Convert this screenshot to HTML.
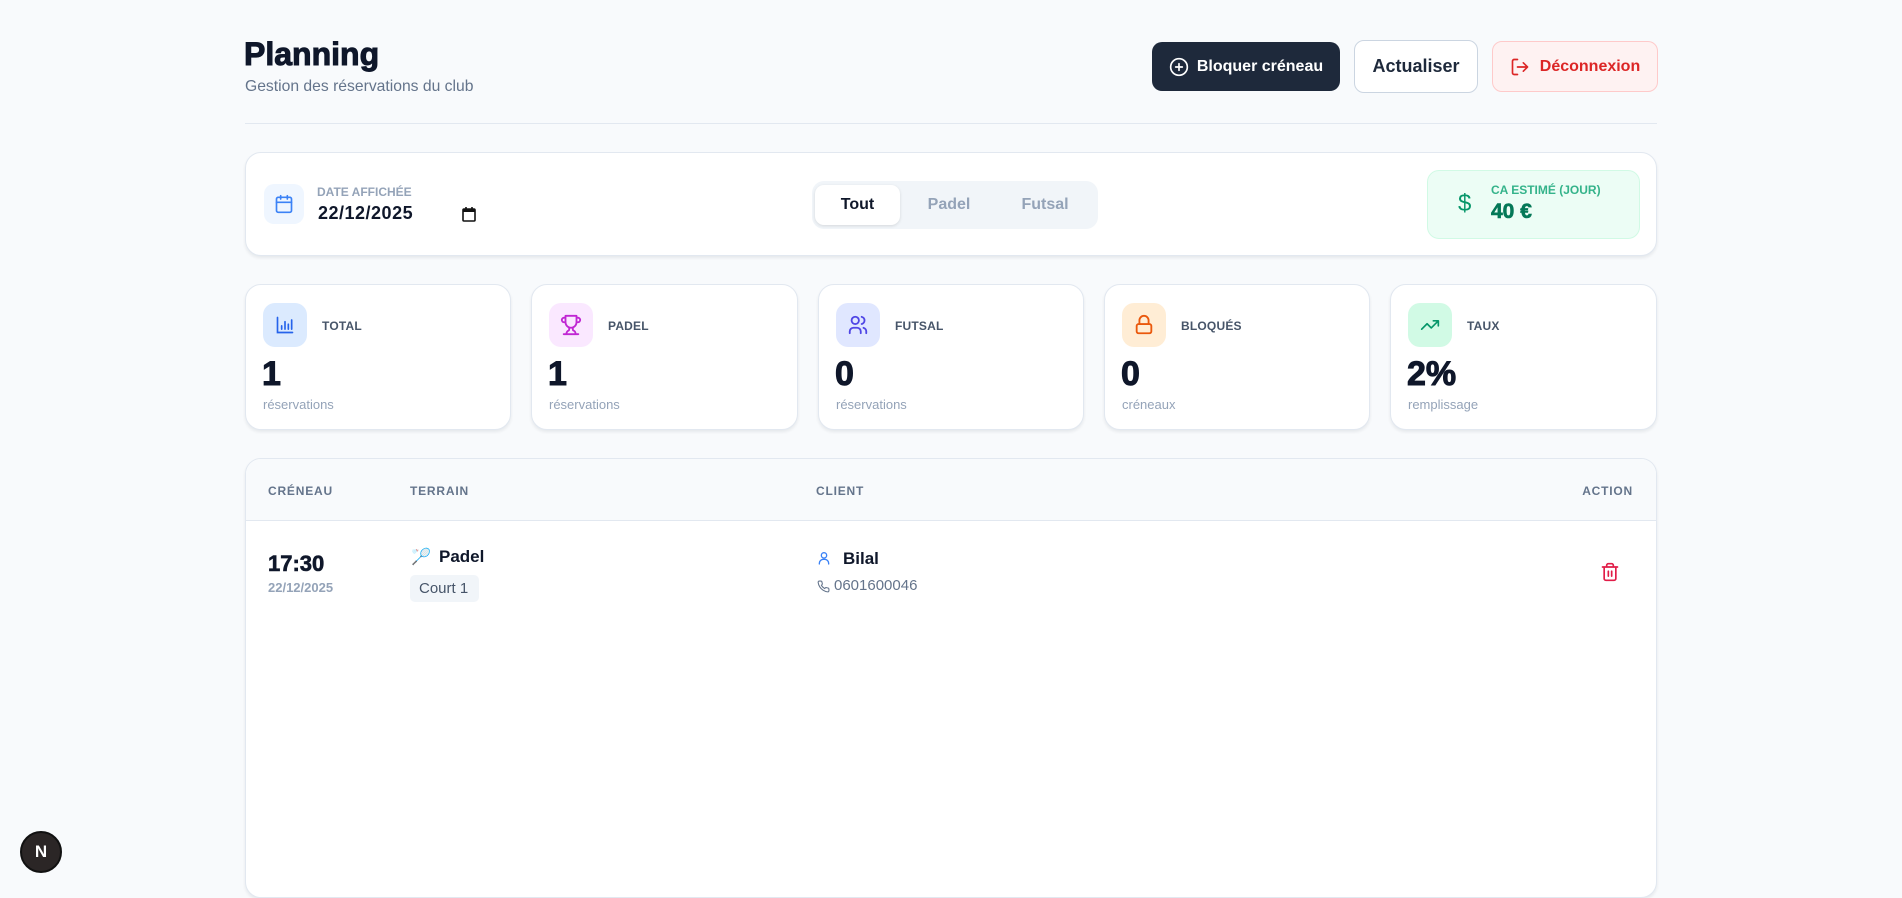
<!DOCTYPE html>
<html><head><meta charset="utf-8"><style>
*{box-sizing:border-box;margin:0;padding:0}
body{width:1902px;height:872px;overflow:hidden;background:#f8fafc;font-family:"Liberation Sans",Arial,sans-serif;position:relative;color:#0f172a}
.a{position:absolute}
.card{position:absolute;background:#fff;border:1px solid #e2e8f0;border-radius:16px;box-shadow:0 2px 3px rgba(15,23,42,.08)}
.btn{position:absolute;border-radius:10px;display:flex;align-items:center;justify-content:center;font-weight:700}
.lbl{font-size:12px;font-weight:700;color:#475569;letter-spacing:.2px}
.num{font-size:34px;font-weight:900;color:#0f172a;-webkit-text-stroke:1px #0f172a}
.sub{font-size:13px;color:#94a3b8}
.ib{position:absolute;width:44px;height:44px;border-radius:12px;display:flex;align-items:center;justify-content:center;left:17px;top:18px}
.th{position:absolute;top:25px;font-size:12px;font-weight:700;color:#64748b;letter-spacing:.8px}
</style></head><body>

<div class="a" style="left:244px;top:36px;font-size:32px;font-weight:900;-webkit-text-stroke:1px #0f172a">Planning</div>
<div class="a" style="left:245px;top:78px;font-size:15.7px;color:#64748b">Gestion des réservations du club</div>

<div class="btn" style="left:1152px;top:42px;width:188px;height:49px;background:#1e293b;color:#fff;font-size:16px">
<svg width="20" height="20" viewBox="0 0 24 24" fill="none" stroke="#fff" stroke-width="2" stroke-linecap="round" style="margin-right:8px"><circle cx="12" cy="12" r="10"/><path d="M12 8v8M8 12h8"/></svg>Bloquer créneau</div>
<div class="btn" style="left:1354px;top:40px;width:124px;height:53px;background:#fff;border:1px solid #cbd5e1;color:#1e293b;font-size:18px">Actualiser</div>
<div class="btn" style="left:1492px;top:41px;width:166px;height:51px;background:#fef2f2;border:1px solid #fecaca;color:#dc2626;font-size:16px">
<svg width="20" height="20" viewBox="0 0 24 24" fill="none" stroke="#dc2626" stroke-width="2" stroke-linecap="round" stroke-linejoin="round" style="margin-right:10px"><path d="M9 21H5a2 2 0 0 1-2-2V5a2 2 0 0 1 2-2h4M16 17l5-5-5-5M21 12H9"/></svg>Déconnexion</div>

<div class="a" style="left:245px;top:123px;width:1412px;height:1px;background:#e2e8f0"></div>

<div class="card" style="left:245px;top:152px;width:1412px;height:104px">
 <div class="a" style="left:18px;top:31px;width:40px;height:40px;border-radius:10px;background:#eff6ff;display:flex;align-items:center;justify-content:center">
 <svg width="20" height="20" viewBox="0 0 24 24" fill="none" stroke="#3b82f6" stroke-width="2" stroke-linecap="round"><rect x="3" y="4" width="18" height="18" rx="2"/><path d="M16 2v4M8 2v4M3 10h18"/></svg></div>
 <div class="a" style="left:71px;top:32px;font-size:12px;font-weight:700;color:#94a3b8">DATE AFFICHÉE</div>
 <div class="a" style="left:72px;top:50px;font-size:18px;font-weight:700;letter-spacing:.5px">22/12/2025</div>
 <svg class="a" style="left:215px;top:53px" width="16" height="16" viewBox="0 0 16 16"><rect x="2" y="3" width="12" height="12" rx="1" fill="none" stroke="#111" stroke-width="1.6"/><rect x="2" y="3" width="12" height="3" fill="#111"/><path d="M5 1v3M11 1v3" stroke="#111" stroke-width="1.6"/></svg>
 <div class="a" style="left:566px;top:28px;width:286px;height:48px;background:#f1f5f9;border-radius:12px"></div>
 <div class="a" style="left:569px;top:32px;width:85px;height:40px;background:#fff;border-radius:9px;box-shadow:0 1px 3px rgba(0,0,0,.12);display:flex;align-items:center;justify-content:center;font-size:16px;font-weight:700">Tout</div>
 <div class="a" style="left:673px;top:43px;width:60px;text-align:center;font-size:16px;font-weight:700;color:#94a3b8">Padel</div>
 <div class="a" style="left:769px;top:43px;width:60px;text-align:center;font-size:16px;font-weight:700;color:#94a3b8">Futsal</div>
 <div class="a" style="left:1181px;top:17px;width:213px;height:69px;background:#ecfdf5;border:1px solid #d1fae5;border-radius:12px">
  <div class="a" style="left:30px;top:19px;font-size:24px;color:#059669">$</div>
  <div class="a" style="left:63px;top:12px;font-size:12px;font-weight:700;color:#34b38a">CA ESTIMÉ (JOUR)</div>
  <div class="a" style="left:63px;top:29px;font-size:21px;font-weight:900;color:#047857;-webkit-text-stroke:.6px #047857">40 €</div>
 </div>
</div>

<div class="card" style="left:245px;top:284px;width:266px;height:146px">
 <div class="ib" style="background:#dbeafe"><svg width="20" height="20" viewBox="0 0 24 24" fill="none" stroke="#2563eb" stroke-width="2" stroke-linecap="round"><path d="M3 3v18h18M8 17v-4M12 17V8M16 17v-6M20 17V6"/></svg></div>
 <div class="a lbl" style="left:76px;top:34px">TOTAL</div>
 <div class="a num" style="left:16px;top:70px">1</div>
 <div class="a sub" style="left:17px;top:112px">réservations</div>
</div>
<div class="card" style="left:531px;top:284px;width:267px;height:146px">
 <div class="ib" style="background:#fae8ff"><svg width="22" height="22" viewBox="0 0 24 24" fill="none" stroke="#c026d3" stroke-width="2" stroke-linecap="round" stroke-linejoin="round"><path d="M6 9H4.5a2.5 2.5 0 0 1 0-5H6M18 9h1.5a2.5 2.5 0 0 0 0-5H18M4 22h16M10 14.7V17c0 .6-.5 1-1 1.2C7.9 18.8 7 20.2 7 22M14 14.7V17c0 .6.5 1 1 1.2 1.200.5 2 2 2 3.8M18 2H6v7a6 6 0 0 0 12 0V2Z"/></svg></div>
 <div class="a lbl" style="left:76px;top:34px">PADEL</div>
 <div class="a num" style="left:16px;top:70px">1</div>
 <div class="a sub" style="left:17px;top:112px">réservations</div>
</div>
<div class="card" style="left:818px;top:284px;width:266px;height:146px">
 <div class="ib" style="background:#e0e7ff"><svg width="22" height="22" viewBox="0 0 24 24" fill="none" stroke="#4f46e5" stroke-width="2" stroke-linecap="round"><circle cx="9" cy="7" r="4"/><path d="M3 21v-2a4 4 0 0 1 4-4h4a4 4 0 0 1 4 4v2M16 3.1a4 4 0 0 1 0 7.8M21 21v-2a4 4 0 0 0-3-3.9"/></svg></div>
 <div class="a lbl" style="left:76px;top:34px">FUTSAL</div>
 <div class="a num" style="left:16px;top:70px">0</div>
 <div class="a sub" style="left:17px;top:112px">réservations</div>
</div>
<div class="card" style="left:1104px;top:284px;width:266px;height:146px">
 <div class="ib" style="background:#ffedd5"><svg width="22" height="22" viewBox="0 0 24 24" fill="none" stroke="#ea580c" stroke-width="2" stroke-linecap="round"><rect x="4" y="11" width="16" height="10" rx="2"/><path d="M7 11V7a5 5 0 0 1 10 0v4"/></svg></div>
 <div class="a lbl" style="left:76px;top:34px">BLOQUÉS</div>
 <div class="a num" style="left:16px;top:70px">0</div>
 <div class="a sub" style="left:17px;top:112px">créneaux</div>
</div>
<div class="card" style="left:1390px;top:284px;width:267px;height:146px">
 <div class="ib" style="background:#d1fae5"><svg width="20" height="20" viewBox="0 0 24 24" fill="none" stroke="#059669" stroke-width="2" stroke-linecap="round" stroke-linejoin="round"><path d="M22 7l-8.5 8.5-5-5L2 17M16 7h6v6"/></svg></div>
 <div class="a lbl" style="left:76px;top:34px">TAUX</div>
 <div class="a num" style="left:16px;top:70px">2%</div>
 <div class="a sub" style="left:17px;top:112px">remplissage</div>
</div>

<div class="card" style="left:245px;top:458px;width:1412px;height:440px;overflow:hidden">
 <div class="a" style="left:0;top:0;width:1412px;height:62px;background:#f8fafc;border-bottom:1px solid #e2e8f0"></div>
 <div class="th" style="left:22px">CRÉNEAU</div>
 <div class="th" style="left:164px">TERRAIN</div>
 <div class="th" style="left:570px">CLIENT</div>
 <div class="th" style="right:23px">ACTION</div>
 <div class="a" style="left:22px;top:92px;font-size:22px;font-weight:900;-webkit-text-stroke:.6px #0f172a">17:30</div>
 <div class="a" style="left:22px;top:121px;font-size:13px;font-weight:700;color:#94a3b8">22/12/2025</div>
 <div class="a" style="left:165px;top:88px;font-size:16px">🏸</div>
 <div class="a" style="left:193px;top:88px;font-size:17px;font-weight:700">Padel</div>
 <div class="a" style="left:164px;top:116px;width:69px;height:27px;background:#f1f5f9;border-radius:5px;font-size:15px;color:#475569;padding:5px 0 0 9px">Court 1</div>
 <svg class="a" style="left:570px;top:91px" width="16" height="16" viewBox="0 0 24 24" fill="none" stroke="#3b82f6" stroke-width="2" stroke-linecap="round"><circle cx="12" cy="8" r="4"/><path d="M5 21v-1a6 6 0 0 1 6-6h2a6 6 0 0 1 6 6v1"/></svg>
 <div class="a" style="left:597px;top:90px;font-size:17px;font-weight:700">Bilal</div>
 <svg class="a" style="left:571px;top:121px" width="13" height="13" viewBox="0 0 24 24" fill="none" stroke="#64748b" stroke-width="2" stroke-linecap="round" stroke-linejoin="round"><path d="M22 16.9v3a2 2 0 0 1-2.2 2 19.8 19.8 0 0 1-8.6-3.1 19.5 19.5 0 0 1-6-6A19.8 19.8 0 0 1 2.1 4.2 2 2 0 0 1 4.1 2h3a2 2 0 0 1 2 1.7c.1.9.4 1.8.7 2.7a2 2 0 0 1-.5 2.1L8.1 9.8a16 16 0 0 0 6 6l1.3-1.3a2 2 0 0 1 2.1-.4c.9.3 1.8.6 2.7.7a2 2 0 0 1 1.7 2Z"/></svg>
 <div class="a" style="left:588px;top:118px;font-size:15px;color:#64748b">0601600046</div>
 <svg class="a" style="left:1354px;top:103px" width="20" height="20" viewBox="0 0 24 24" fill="none" stroke="#e11d48" stroke-width="2" stroke-linecap="round"><path d="M3 6h18M19 6v14a2 2 0 0 1-2 2H7a2 2 0 0 1-2-2V6M8 6V4a2 2 0 0 1 2-2h4a2 2 0 0 1 2 2v2M10 11v6M14 11v6"/></svg>
</div>

<div class="a" style="left:20px;top:831px;width:42px;height:42px;border-radius:50%;background:#2b2626;border:2px solid #111;display:flex;align-items:center;justify-content:center;color:#fff;font-size:17px;font-weight:700">N</div>
</body></html>
